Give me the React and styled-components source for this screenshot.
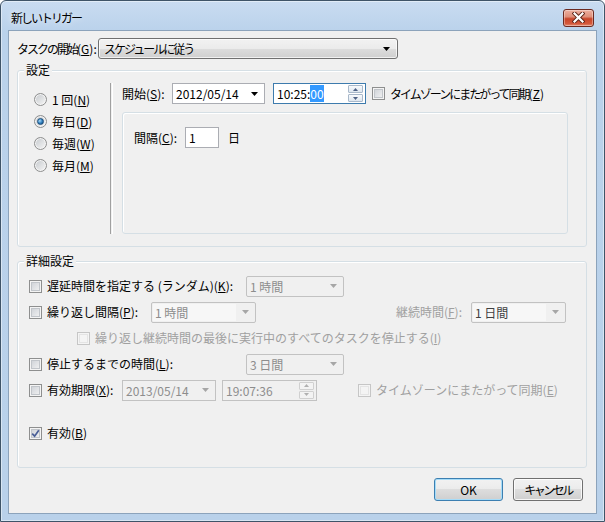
import React from 'react';
import styled, { createGlobalStyle } from 'styled-components';

const GlobalStyle = createGlobalStyle`
    html, body {
        margin: 0;
        padding: 0;
        background: #ffffff;
    }
`;

const Window = styled.div`
    width: 605px;
    height: 522px;
    box-sizing: border-box;
    border: 1px solid #3f5468;
    border-radius: 6px 6px 0 0;
    background: linear-gradient(180deg, #c9dcf1 0%, #bad2eb 30px, #b9d1ea 100%);
    box-shadow: inset 0 0 0 1px rgba(255, 255, 255, 0.45);
    display: flex;
    flex-direction: column;
    font-family: "Noto Sans CJK JP", "Liberation Sans", sans-serif;
    font-size: 12px;
    color: #000;
    overflow: hidden;
`;

const TitleBar = styled.div`
    height: 29px;
    box-sizing: border-box;
    padding: 4px 10px 0 10px;
    display: flex;
    align-items: center;
    justify-content: space-between;
`;

const Title = styled.span`
    font-size: 12px;
    line-height: 14px;
    letter-spacing: -2px;
    text-shadow: 0 0 6px rgba(255, 255, 255, 0.9);
`;

const CloseButton = styled.div`
    width: 31px;
    height: 18px;
    box-sizing: border-box;
    border: 1px solid #6b2a21;
    border-radius: 3px;
    background: linear-gradient(180deg, #eeb0a0 0%, #de8f7a 42%, #c8452a 55%, #d4583b 85%, #e48d73 100%);
    box-shadow: inset 0 0 0 1px rgba(255, 255, 255, 0.35);
    display: flex;
    align-items: center;
    justify-content: center;
`;

const Client = styled.div`
    margin: 0 7px;
    height: 484px;
    box-sizing: border-box;
    border: 1px solid #8ca3bb;
    background: #f0f0f0;
    padding: 7px 9px 0 8px;
    display: flex;
    flex-direction: column;
`;

const Row = styled.div`
    display: flex;
    align-items: center;
`;

const TopRow = styled(Row)`
    height: 21px;
    margin-bottom: 4px;
`;

const Label = styled.span`
    width: ${p => (p.$w ? `${p.$w}px` : 'auto')};
    flex-shrink: 0;
    white-space: nowrap;
    line-height: 14px;
    margin-left: ${p => (p.$ml ? `${p.$ml}px` : '0')};
    color: ${p => (p.$disabled ? '#a0a0a0' : '#000')};
`;

/* katakana runs are narrow in the original UI font */
const Kana = styled.span`
    letter-spacing: ${p => (p.$tight ? '-2.5px' : '-2px')};
`;

const Key = styled.u`
    text-decoration-thickness: 1px;
    text-underline-offset: 1px;
`;

const DropButton = styled.div`
    width: 300px;
    height: 21px;
    box-sizing: border-box;
    border: 1px solid #707070;
    border-radius: 3px;
    background: linear-gradient(180deg, #f2f2f2 0%, #ebebeb 50%, #dddddd 50%, #cfcfcf 100%);
    box-shadow: inset 0 0 0 1px rgba(255, 255, 255, 0.7);
    display: flex;
    align-items: center;
    justify-content: space-between;
    padding: 0 7px 0 5px;
`;

const Group = styled.fieldset`
    margin: ${p => (p.$mt ? `${p.$mt}px` : '0')} 0 0 0;
    padding: 0;
    min-width: 0;
    border: 1px solid #d5dfe5;
    border-radius: 3px;
    box-shadow: inset 1px 1px 0 #ffffff;
`;

const Legend = styled.legend`
    margin-left: 6px;
    padding: 0 2px;
    line-height: 14px;
    font-size: 12px;
    background: #f0f0f0;
`;

const SettingsBody = styled.div`
    display: flex;
    padding: 6px 18px 12px 0;
`;

const RadioColumn = styled.div`
    width: 92px;
    box-sizing: border-box;
    padding: 5px 0 0 16px;
    display: flex;
    flex-direction: column;
`;

const RadioRow = styled(Row)`
    height: 22px;
    gap: 5px;
    white-space: nowrap;
`;

const Radio = styled.span`
    width: 13px;
    height: 13px;
    box-sizing: border-box;
    border-radius: 50%;
    border: 1px solid #8e8f8f;
    background: linear-gradient(135deg, #c4c8cc 0%, #f7f7f7 100%);
    box-shadow: inset 0 0 0 1px #f4f4f4;
    display: flex;
    align-items: center;
    justify-content: center;
    flex-shrink: 0;
`;

const RadioDot = styled.span`
    width: 7px;
    height: 7px;
    border-radius: 50%;
    box-sizing: border-box;
    border: 1px solid #1d4f7c;
    background: radial-gradient(circle at 35% 35%, #a9dbf8 0%, #3583c2 50%, #0e406f 100%);
`;

const Separator = styled.div`
    width: 1px;
    border-left: 1px solid #a0a0a0;
    border-right: 1px solid #ffffff;
    margin-right: 9px;
`;

const RightColumn = styled.div`
    flex: 1;
    display: flex;
    flex-direction: column;
`;

const StartRow = styled(Row)`
    height: 21px;
    margin-bottom: 8px;
`;

const Field = styled.div`
    width: ${p => p.$w}px;
    height: 21px;
    box-sizing: border-box;
    flex-shrink: 0;
    margin-left: ${p => (p.$ml ? `${p.$ml}px` : '0')};
    border: 1px solid ${p => (p.$focus ? '#3d7bad' : p.$disabled ? '#c2c2c2' : '#abadb3')};
    border-radius: ${p => (p.$round ? '2px' : '0')};
    background: ${p => (p.$disabled ? '#f0f0f0' : '#ffffff')};
    color: ${p => (p.$disabled ? '#8d8d8d' : '#000')};
    display: flex;
    align-items: center;
    padding: 0 ${p => (p.$pr !== undefined ? p.$pr : 6)}px 0 1px;
    white-space: nowrap;
`;

const FieldText = styled.span`
    flex: 1;
    align-self: stretch;
    display: flex;
    align-items: center;
    padding-left: 2px;
    margin: 1px 6px 1px 0;
    color: ${p => p.$color || 'inherit'};
    background: ${p => (p.$hl ? '#f7f7f7' : 'transparent')};
`;

const Selected = styled.span`
    background: #3399ff;
    color: #ffffff;
`;

const Spin = styled.div`
    display: flex;
    flex-direction: column;
    gap: 1px;
`;

const SpinBtn = styled.span`
    width: 15px;
    height: 8px;
    box-sizing: border-box;
    border: 1px solid ${p => (p.$disabled ? '#d0d0d0' : '#a8b8ca')};
    border-radius: 1px;
    background: ${p => (p.$disabled ? '#f3f3f3' : 'linear-gradient(180deg, #f8fafc 0%, #dde6ef 100%)')};
    display: flex;
    align-items: center;
    justify-content: center;
`;

const Check = styled.span`
    width: 13px;
    height: 13px;
    box-sizing: border-box;
    flex-shrink: 0;
    border: 1px solid ${p => (p.$disabled ? '#c6c6c6' : '#8e8f8f')};
    background: ${p => (p.$disabled ? '#f4f4f4' : 'linear-gradient(135deg, #c9cdd3 0%, #f6f6f6 100%)')};
    box-shadow: inset 0 0 0 1px #f4f4f4, inset 0 0 0 2px ${p => (p.$disabled ? '#e4e4e4' : '#c1c5ca')};
    display: flex;
    align-items: center;
    justify-content: center;
`;

const CheckField = styled.div`
    display: flex;
    align-items: center;
    gap: 5px;
    width: ${p => (p.$w ? `${p.$w}px` : 'auto')};
    flex-shrink: 0;
    white-space: nowrap;
    line-height: 14px;
    margin-left: ${p => (p.$ml ? `${p.$ml}px` : '0')};
    color: ${p => (p.$disabled ? '#a0a0a0' : '#000')};
`;

const Panel = styled.div`
    height: 122px;
    box-sizing: border-box;
    border: 1px solid #d5dfe5;
    border-radius: 3px;
    box-shadow: inset 1px 1px 0 #ffffff;
    padding: 14px 11px 0 11px;
`;

const DetailBody = styled.div`
    display: flex;
    flex-direction: column;
    padding: 5px 20px 21px 11px;
`;

const DetailRow = styled(Row)`
    height: 26px;
    margin-left: ${p => (p.$indent ? `${p.$indent}px` : '0')};
    margin-top: ${p => (p.$mt ? `${p.$mt}px` : '0')};
`;

const RightGroup = styled(Row)`
    margin-left: auto;
    gap: 9px;
`;

const ButtonBar = styled(Row)`
    justify-content: flex-end;
    gap: 10px;
    margin-top: 10px;
    padding-right: 4px;
`;

const Button = styled.div`
    width: ${p => p.$w}px;
    height: 23px;
    box-sizing: border-box;
    border: 1px solid ${p => (p.$default ? '#3c7fb1' : '#707070')};
    border-radius: 3px;
    background: linear-gradient(180deg, #f2f2f2 0%, #ebebeb 50%, #dddddd 50%, #cfcfcf 100%);
    box-shadow: inset 0 0 0 1px ${p => (p.$default ? '#a6dcf8' : 'rgba(255, 255, 255, 0.8)')};
    display: flex;
    align-items: center;
    justify-content: center;
    line-height: 14px;
`;

const Arrow = ({ disabled }) => (
    <svg width="7" height="4" viewBox="0 0 7 4">
        <path d="M0 0H7L3.5 4Z" fill={disabled ? '#a6a6a6' : '#000'} />
    </svg>
);

const SpinArrows = ({ disabled }) => {
    const c = disabled ? '#b0b0b0' : '#4d6185';
    return (
        <Spin>
            <SpinBtn $disabled={disabled}>
                <svg width="5" height="3" viewBox="0 0 5 3"><path d="M0 3H5L2.5 0Z" fill={c} /></svg>
            </SpinBtn>
            <SpinBtn $disabled={disabled}>
                <svg width="5" height="3" viewBox="0 0 5 3"><path d="M0 0H5L2.5 3Z" fill={c} /></svg>
            </SpinBtn>
        </Spin>
    );
};

const CheckBox = ({ checked, disabled }) => (
    <Check $disabled={disabled}>
        {checked && (
            <svg width="9" height="9" viewBox="0 0 9 9">
                <path d="M1.2 4.6L3.6 7.2L7.8 1.2" fill="none" stroke="#4a5f97" strokeWidth="1.7" />
            </svg>
        )}
    </Check>
);

const Combo = ({ w, text, hl, color }) => (
    <Field $w={w} $disabled $round $pr={6}>
        <FieldText $hl={hl} $color={color}>{text}</FieldText>
        <Arrow disabled />
    </Field>
);

const radios = [
    { label: '1 回', key: 'N' },
    { label: '毎日', key: 'D', checked: true },
    { label: '毎週', key: 'W' },
    { label: '毎月', key: 'M' },
];

const App = () => {
    return (
        <Window>
            <GlobalStyle />
            <TitleBar>
                <Title>新しいトリガー</Title>
                <CloseButton>
                    <svg width="13" height="11" viewBox="0 0 13 11">
                        <path d="M2.5 1.5L10.5 9.5M10.5 1.5L2.5 9.5" stroke="#5a2418" strokeWidth="4" strokeLinecap="square" />
                        <path d="M2.5 1.5L10.5 9.5M10.5 1.5L2.5 9.5" stroke="#ffffff" strokeWidth="2.2" strokeLinecap="square" />
                    </svg>
                </CloseButton>
            </TitleBar>
            <Client>
                <TopRow>
                    <Label $w={81}><Kana>タスクの開始</Kana>(<Key>G</Key>):</Label>
                    <DropButton>
                        <Kana>スケジュールに従う</Kana>
                        <Arrow />
                    </DropButton>
                </TopRow>

                <Group>
                    <Legend>設定</Legend>
                    <SettingsBody>
                        <RadioColumn>
                            {radios.map(r => (
                                <RadioRow key={r.key}>
                                    <Radio>{r.checked && <RadioDot />}</Radio>
                                    <span>{r.label}(<Key>{r.key}</Key>)</span>
                                </RadioRow>
                            ))}
                        </RadioColumn>
                        <Separator />
                        <RightColumn>
                            <StartRow>
                                <Label $w={50}>開始(<Key>S</Key>):</Label>
                                <Field $w={93}>
                                    <FieldText>2012/05/14</FieldText>
                                    <Arrow />
                                </Field>
                                <Field $w={93} $ml={8} $focus $pr={2}>
                                    <FieldText>10:25:<Selected>00</Selected></FieldText>
                                    <SpinArrows />
                                </Field>
                                <CheckField $ml={6}>
                                    <CheckBox />
                                    <span><Kana>タイムゾーンにまたがって同期</Kana>(<Key>Z</Key>)</span>
                                </CheckField>
                            </StartRow>
                            <Panel>
                                <Row>
                                    <Label $w={51}>間隔(<Key>C</Key>):</Label>
                                    <Field $w={34}>
                                        <FieldText>1</FieldText>
                                    </Field>
                                    <Label $ml={9}>日</Label>
                                </Row>
                            </Panel>
                        </RightColumn>
                    </SettingsBody>
                </Group>

                <Group $mt={7}>
                    <Legend>詳細設定</Legend>
                    <DetailBody>
                        <DetailRow>
                            <CheckField $w={217}>
                                <CheckBox />
                                <span>遅延時間を指定する (ランダム)(<Key>K</Key>):</span>
                            </CheckField>
                            <Combo w={98} text="1 時間" />
                        </DetailRow>
                        <DetailRow>
                            <CheckField $w={122}>
                                <CheckBox />
                                <span>繰り返し間隔(<Key>P</Key>):</span>
                            </CheckField>
                            <Combo w={105} text="1 時間" hl />
                            <RightGroup>
                                <Label $disabled>継続時間(<Key>F</Key>):</Label>
                                <Combo w={95} text="1 日間" hl color="#404040" />
                            </RightGroup>
                        </DetailRow>
                        <DetailRow $indent={48}>
                            <CheckField $disabled>
                                <CheckBox disabled />
                                <span>繰り返し継続時間の最後に実行中のすべてのタスクを停止する(<Key>I</Key>)</span>
                            </CheckField>
                        </DetailRow>
                        <DetailRow>
                            <CheckField $w={217}>
                                <CheckBox />
                                <span>停止するまでの時間(<Key>L</Key>):</span>
                            </CheckField>
                            <Combo w={98} text="3 日間" />
                        </DetailRow>
                        <DetailRow>
                            <CheckField $w={93}>
                                <CheckBox />
                                <span>有効期限(<Key>X</Key>):</span>
                            </CheckField>
                            <Field $w={94} $disabled>
                                <FieldText>2013/05/14</FieldText>
                                <Arrow disabled />
                            </Field>
                            <Field $w={95} $ml={6} $disabled $pr={2}>
                                <FieldText>19:07:36</FieldText>
                                <SpinArrows disabled />
                            </Field>
                            <CheckField $ml={41} $disabled>
                                <CheckBox disabled />
                                <span>タイムゾーンにまたがって同期(<Key>E</Key>)</span>
                            </CheckField>
                        </DetailRow>
                        <DetailRow $mt={17}>
                            <CheckField>
                                <CheckBox checked />
                                <span>有効(<Key>B</Key>)</span>
                            </CheckField>
                        </DetailRow>
                    </DetailBody>
                </Group>

                <ButtonBar>
                    <Button $w={69} $default>OK</Button>
                    <Button $w={70}><Kana $tight>キャンセル</Kana></Button>
                </ButtonBar>
            </Client>
        </Window>
    );
};

export default App;
